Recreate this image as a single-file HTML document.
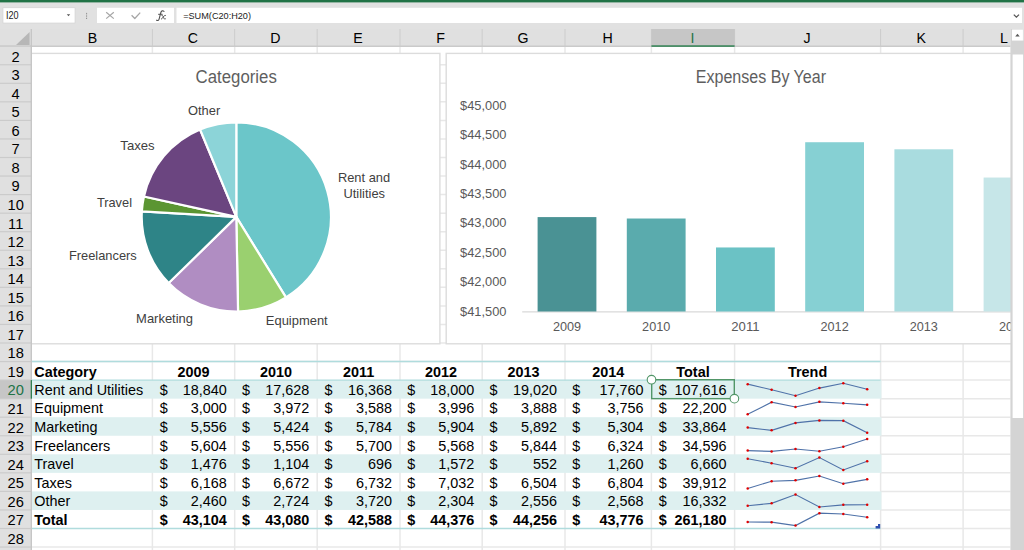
<!DOCTYPE html><html><head><meta charset="utf-8"><style>html,body{margin:0;padding:0;width:1024px;height:550px;overflow:hidden;background:#fff}svg{display:block}text{font-family:"Liberation Sans",sans-serif}</style></head><body>
<svg width="1024" height="550" viewBox="0 0 1024 550">
<rect x="0" y="0" width="1024" height="29" fill="#e1e1e1"/>
<rect x="0" y="0" width="1024" height="2.4" fill="#217346"/>
<rect x="3" y="7.8" width="72" height="15.2" fill="#fff" stroke="#d0d0d0" stroke-width="0.6"/>
<text x="6" y="19.2" font-size="10.2" fill="#222" textLength="12.6" lengthAdjust="spacingAndGlyphs">I20</text>
<path d="M66.8 14.2 L70.2 14.2 L68.5 16.2 Z" fill="#555"/>
<rect x="86.1" y="12.9" width="1.0" height="1.0" fill="#8a8a8a"/>
<rect x="86.1" y="14.6" width="1.0" height="1.0" fill="#8a8a8a"/>
<rect x="86.1" y="16.3" width="1.0" height="1.0" fill="#8a8a8a"/>
<rect x="86.1" y="18.0" width="1.0" height="1.0" fill="#8a8a8a"/>
<rect x="97" y="7.8" width="77" height="15.2" fill="#fff"/>
<path d="M106.2 12.2 L113.8 18.6 M113.8 12.2 L106.2 18.6" stroke="#a6a6a6" stroke-width="1.2" fill="none"/>
<path d="M131.6 15.2 L134.8 18.5 L140.2 12.6" stroke="#a6a6a6" stroke-width="1.3" fill="none" stroke-linejoin="round"/>
<path d="M164 11.3 C163 10.4 161.3 10.6 160.8 12.6 L159.1 19.2 C158.7 20.4 157.6 20.8 156.6 20.2 M158.6 14.3 L162.2 14.3" stroke="#505050" stroke-width="1.1" fill="none" stroke-linecap="round"/>
<path d="M161.9 15.3 C162.8 15.2 163.1 16.2 163.6 17.6 C164 18.8 164.4 19.4 165.4 18.9 M165.4 15.4 C164.6 15.3 163.9 16 162.9 17.3 C162.2 18.4 161.7 19.3 161.3 19" stroke="#505050" stroke-width="1" fill="none" stroke-linecap="round"/>
<rect x="176.5" y="7.8" width="845.5" height="15.2" fill="#fff"/>
<text x="183.2" y="19.4" font-size="9.9" fill="#222" textLength="67.8" lengthAdjust="spacingAndGlyphs">=SUM(C20:H20)</text>
<path d="M1013.8 14.6 L1016.4 17.2 L1019.0 14.6" stroke="#555" stroke-width="1.3" fill="none"/>
<rect x="31" y="46.2" width="979.5" height="503.8" fill="#fff"/>
<line x1="31" y1="46.20" x2="1010.5" y2="46.20" stroke="#e8e8e8" stroke-width="1.5"/>
<line x1="31" y1="64.75" x2="1010.5" y2="64.75" stroke="#e8e8e8" stroke-width="1.5"/>
<line x1="31" y1="83.30" x2="1010.5" y2="83.30" stroke="#e8e8e8" stroke-width="1.5"/>
<line x1="31" y1="101.85" x2="1010.5" y2="101.85" stroke="#e8e8e8" stroke-width="1.5"/>
<line x1="31" y1="120.40" x2="1010.5" y2="120.40" stroke="#e8e8e8" stroke-width="1.5"/>
<line x1="31" y1="138.95" x2="1010.5" y2="138.95" stroke="#e8e8e8" stroke-width="1.5"/>
<line x1="31" y1="157.50" x2="1010.5" y2="157.50" stroke="#e8e8e8" stroke-width="1.5"/>
<line x1="31" y1="176.05" x2="1010.5" y2="176.05" stroke="#e8e8e8" stroke-width="1.5"/>
<line x1="31" y1="194.60" x2="1010.5" y2="194.60" stroke="#e8e8e8" stroke-width="1.5"/>
<line x1="31" y1="213.15" x2="1010.5" y2="213.15" stroke="#e8e8e8" stroke-width="1.5"/>
<line x1="31" y1="231.70" x2="1010.5" y2="231.70" stroke="#e8e8e8" stroke-width="1.5"/>
<line x1="31" y1="250.25" x2="1010.5" y2="250.25" stroke="#e8e8e8" stroke-width="1.5"/>
<line x1="31" y1="268.80" x2="1010.5" y2="268.80" stroke="#e8e8e8" stroke-width="1.5"/>
<line x1="31" y1="287.35" x2="1010.5" y2="287.35" stroke="#e8e8e8" stroke-width="1.5"/>
<line x1="31" y1="305.90" x2="1010.5" y2="305.90" stroke="#e8e8e8" stroke-width="1.5"/>
<line x1="31" y1="324.45" x2="1010.5" y2="324.45" stroke="#e8e8e8" stroke-width="1.5"/>
<line x1="31" y1="343.00" x2="1010.5" y2="343.00" stroke="#e8e8e8" stroke-width="1.5"/>
<line x1="31" y1="361.55" x2="1010.5" y2="361.55" stroke="#e8e8e8" stroke-width="1.5"/>
<line x1="880.60" y1="380.10" x2="1010.5" y2="380.10" stroke="#e8e8e8" stroke-width="1.5"/>
<line x1="880.60" y1="398.65" x2="1010.5" y2="398.65" stroke="#e8e8e8" stroke-width="1.5"/>
<line x1="880.60" y1="417.20" x2="1010.5" y2="417.20" stroke="#e8e8e8" stroke-width="1.5"/>
<line x1="880.60" y1="435.75" x2="1010.5" y2="435.75" stroke="#e8e8e8" stroke-width="1.5"/>
<line x1="880.60" y1="454.30" x2="1010.5" y2="454.30" stroke="#e8e8e8" stroke-width="1.5"/>
<line x1="880.60" y1="472.85" x2="1010.5" y2="472.85" stroke="#e8e8e8" stroke-width="1.5"/>
<line x1="880.60" y1="491.40" x2="1010.5" y2="491.40" stroke="#e8e8e8" stroke-width="1.5"/>
<line x1="880.60" y1="509.95" x2="1010.5" y2="509.95" stroke="#e8e8e8" stroke-width="1.5"/>
<line x1="880.60" y1="528.50" x2="1010.5" y2="528.50" stroke="#e8e8e8" stroke-width="1.5"/>
<line x1="31" y1="547.05" x2="1010.5" y2="547.05" stroke="#e8e8e8" stroke-width="1.5"/>
<line x1="152.40" y1="29.0" x2="152.40" y2="550" stroke="#e8e8e8" stroke-width="1.5"/>
<line x1="234.70" y1="29.0" x2="234.70" y2="550" stroke="#e8e8e8" stroke-width="1.5"/>
<line x1="317.20" y1="29.0" x2="317.20" y2="550" stroke="#e8e8e8" stroke-width="1.5"/>
<line x1="400.00" y1="29.0" x2="400.00" y2="550" stroke="#e8e8e8" stroke-width="1.5"/>
<line x1="482.20" y1="29.0" x2="482.20" y2="550" stroke="#e8e8e8" stroke-width="1.5"/>
<line x1="565.00" y1="29.0" x2="565.00" y2="550" stroke="#e8e8e8" stroke-width="1.5"/>
<line x1="651.40" y1="29.0" x2="651.40" y2="550" stroke="#e8e8e8" stroke-width="1.5"/>
<line x1="734.60" y1="29.0" x2="734.60" y2="550" stroke="#e8e8e8" stroke-width="1.5"/>
<line x1="880.60" y1="29.0" x2="880.60" y2="550" stroke="#e8e8e8" stroke-width="1.5"/>
<line x1="963.10" y1="29.0" x2="963.10" y2="550" stroke="#e8e8e8" stroke-width="1.5"/>
<rect x="31.5" y="380.10" width="849.90" height="18.55" fill="#def0f0"/>
<rect x="31.5" y="417.20" width="849.90" height="18.55" fill="#def0f0"/>
<rect x="31.5" y="454.30" width="849.90" height="18.55" fill="#def0f0"/>
<rect x="31.5" y="491.40" width="849.90" height="18.55" fill="#def0f0"/>
<line x1="31.5" y1="361.55" x2="880.6" y2="361.55" stroke="#b0dcdd" stroke-width="1.4"/>
<line x1="31.5" y1="380.10" x2="880.6" y2="380.10" stroke="#b0dcdd" stroke-width="1.4"/>
<line x1="31.5" y1="528.50" x2="880.6" y2="528.50" stroke="#b0dcdd" stroke-width="1.4"/>
<text x="34.30" y="376.85" font-size="14.4" text-anchor="start" fill="#000" font-weight="bold">Category</text>
<text x="193.55" y="376.85" font-size="14.4" text-anchor="middle" fill="#000" font-weight="bold">2009</text>
<text x="275.95" y="376.85" font-size="14.4" text-anchor="middle" fill="#000" font-weight="bold">2010</text>
<text x="358.60" y="376.85" font-size="14.4" text-anchor="middle" fill="#000" font-weight="bold">2011</text>
<text x="441.10" y="376.85" font-size="14.4" text-anchor="middle" fill="#000" font-weight="bold">2012</text>
<text x="523.60" y="376.85" font-size="14.4" text-anchor="middle" fill="#000" font-weight="bold">2013</text>
<text x="608.20" y="376.85" font-size="14.4" text-anchor="middle" fill="#000" font-weight="bold">2014</text>
<text x="693.00" y="376.85" font-size="14.4" text-anchor="middle" fill="#000" font-weight="bold">Total</text>
<text x="807.60" y="376.85" font-size="14.4" text-anchor="middle" fill="#000" font-weight="bold">Trend</text>
<text x="34.30" y="394.90" font-size="14.4" text-anchor="start" fill="#000">Rent and Utilities</text>
<text x="159.70" y="394.90" font-size="14.4" text-anchor="start" fill="#000">$</text>
<text x="226.70" y="394.90" font-size="14.4" text-anchor="end" fill="#000">18,840</text>
<text x="242.00" y="394.90" font-size="14.4" text-anchor="start" fill="#000">$</text>
<text x="309.20" y="394.90" font-size="14.4" text-anchor="end" fill="#000">17,628</text>
<text x="324.50" y="394.90" font-size="14.4" text-anchor="start" fill="#000">$</text>
<text x="392.00" y="394.90" font-size="14.4" text-anchor="end" fill="#000">16,368</text>
<text x="407.30" y="394.90" font-size="14.4" text-anchor="start" fill="#000">$</text>
<text x="474.20" y="394.90" font-size="14.4" text-anchor="end" fill="#000">18,000</text>
<text x="489.50" y="394.90" font-size="14.4" text-anchor="start" fill="#000">$</text>
<text x="557.00" y="394.90" font-size="14.4" text-anchor="end" fill="#000">19,020</text>
<text x="572.30" y="394.90" font-size="14.4" text-anchor="start" fill="#000">$</text>
<text x="643.40" y="394.90" font-size="14.4" text-anchor="end" fill="#000">17,760</text>
<text x="658.70" y="394.90" font-size="14.4" text-anchor="start" fill="#000">$</text>
<text x="726.60" y="394.90" font-size="14.4" text-anchor="end" fill="#000">107,616</text>
<text x="34.30" y="413.45" font-size="14.4" text-anchor="start" fill="#000">Equipment</text>
<text x="159.70" y="413.45" font-size="14.4" text-anchor="start" fill="#000">$</text>
<text x="226.70" y="413.45" font-size="14.4" text-anchor="end" fill="#000">3,000</text>
<text x="242.00" y="413.45" font-size="14.4" text-anchor="start" fill="#000">$</text>
<text x="309.20" y="413.45" font-size="14.4" text-anchor="end" fill="#000">3,972</text>
<text x="324.50" y="413.45" font-size="14.4" text-anchor="start" fill="#000">$</text>
<text x="392.00" y="413.45" font-size="14.4" text-anchor="end" fill="#000">3,588</text>
<text x="407.30" y="413.45" font-size="14.4" text-anchor="start" fill="#000">$</text>
<text x="474.20" y="413.45" font-size="14.4" text-anchor="end" fill="#000">3,996</text>
<text x="489.50" y="413.45" font-size="14.4" text-anchor="start" fill="#000">$</text>
<text x="557.00" y="413.45" font-size="14.4" text-anchor="end" fill="#000">3,888</text>
<text x="572.30" y="413.45" font-size="14.4" text-anchor="start" fill="#000">$</text>
<text x="643.40" y="413.45" font-size="14.4" text-anchor="end" fill="#000">3,756</text>
<text x="658.70" y="413.45" font-size="14.4" text-anchor="start" fill="#000">$</text>
<text x="726.60" y="413.45" font-size="14.4" text-anchor="end" fill="#000">22,200</text>
<text x="34.30" y="432.00" font-size="14.4" text-anchor="start" fill="#000">Marketing</text>
<text x="159.70" y="432.00" font-size="14.4" text-anchor="start" fill="#000">$</text>
<text x="226.70" y="432.00" font-size="14.4" text-anchor="end" fill="#000">5,556</text>
<text x="242.00" y="432.00" font-size="14.4" text-anchor="start" fill="#000">$</text>
<text x="309.20" y="432.00" font-size="14.4" text-anchor="end" fill="#000">5,424</text>
<text x="324.50" y="432.00" font-size="14.4" text-anchor="start" fill="#000">$</text>
<text x="392.00" y="432.00" font-size="14.4" text-anchor="end" fill="#000">5,784</text>
<text x="407.30" y="432.00" font-size="14.4" text-anchor="start" fill="#000">$</text>
<text x="474.20" y="432.00" font-size="14.4" text-anchor="end" fill="#000">5,904</text>
<text x="489.50" y="432.00" font-size="14.4" text-anchor="start" fill="#000">$</text>
<text x="557.00" y="432.00" font-size="14.4" text-anchor="end" fill="#000">5,892</text>
<text x="572.30" y="432.00" font-size="14.4" text-anchor="start" fill="#000">$</text>
<text x="643.40" y="432.00" font-size="14.4" text-anchor="end" fill="#000">5,304</text>
<text x="658.70" y="432.00" font-size="14.4" text-anchor="start" fill="#000">$</text>
<text x="726.60" y="432.00" font-size="14.4" text-anchor="end" fill="#000">33,864</text>
<text x="34.30" y="450.55" font-size="14.4" text-anchor="start" fill="#000">Freelancers</text>
<text x="159.70" y="450.55" font-size="14.4" text-anchor="start" fill="#000">$</text>
<text x="226.70" y="450.55" font-size="14.4" text-anchor="end" fill="#000">5,604</text>
<text x="242.00" y="450.55" font-size="14.4" text-anchor="start" fill="#000">$</text>
<text x="309.20" y="450.55" font-size="14.4" text-anchor="end" fill="#000">5,556</text>
<text x="324.50" y="450.55" font-size="14.4" text-anchor="start" fill="#000">$</text>
<text x="392.00" y="450.55" font-size="14.4" text-anchor="end" fill="#000">5,700</text>
<text x="407.30" y="450.55" font-size="14.4" text-anchor="start" fill="#000">$</text>
<text x="474.20" y="450.55" font-size="14.4" text-anchor="end" fill="#000">5,568</text>
<text x="489.50" y="450.55" font-size="14.4" text-anchor="start" fill="#000">$</text>
<text x="557.00" y="450.55" font-size="14.4" text-anchor="end" fill="#000">5,844</text>
<text x="572.30" y="450.55" font-size="14.4" text-anchor="start" fill="#000">$</text>
<text x="643.40" y="450.55" font-size="14.4" text-anchor="end" fill="#000">6,324</text>
<text x="658.70" y="450.55" font-size="14.4" text-anchor="start" fill="#000">$</text>
<text x="726.60" y="450.55" font-size="14.4" text-anchor="end" fill="#000">34,596</text>
<text x="34.30" y="469.10" font-size="14.4" text-anchor="start" fill="#000">Travel</text>
<text x="159.70" y="469.10" font-size="14.4" text-anchor="start" fill="#000">$</text>
<text x="226.70" y="469.10" font-size="14.4" text-anchor="end" fill="#000">1,476</text>
<text x="242.00" y="469.10" font-size="14.4" text-anchor="start" fill="#000">$</text>
<text x="309.20" y="469.10" font-size="14.4" text-anchor="end" fill="#000">1,104</text>
<text x="324.50" y="469.10" font-size="14.4" text-anchor="start" fill="#000">$</text>
<text x="392.00" y="469.10" font-size="14.4" text-anchor="end" fill="#000">696</text>
<text x="407.30" y="469.10" font-size="14.4" text-anchor="start" fill="#000">$</text>
<text x="474.20" y="469.10" font-size="14.4" text-anchor="end" fill="#000">1,572</text>
<text x="489.50" y="469.10" font-size="14.4" text-anchor="start" fill="#000">$</text>
<text x="557.00" y="469.10" font-size="14.4" text-anchor="end" fill="#000">552</text>
<text x="572.30" y="469.10" font-size="14.4" text-anchor="start" fill="#000">$</text>
<text x="643.40" y="469.10" font-size="14.4" text-anchor="end" fill="#000">1,260</text>
<text x="658.70" y="469.10" font-size="14.4" text-anchor="start" fill="#000">$</text>
<text x="726.60" y="469.10" font-size="14.4" text-anchor="end" fill="#000">6,660</text>
<text x="34.30" y="487.65" font-size="14.4" text-anchor="start" fill="#000">Taxes</text>
<text x="159.70" y="487.65" font-size="14.4" text-anchor="start" fill="#000">$</text>
<text x="226.70" y="487.65" font-size="14.4" text-anchor="end" fill="#000">6,168</text>
<text x="242.00" y="487.65" font-size="14.4" text-anchor="start" fill="#000">$</text>
<text x="309.20" y="487.65" font-size="14.4" text-anchor="end" fill="#000">6,672</text>
<text x="324.50" y="487.65" font-size="14.4" text-anchor="start" fill="#000">$</text>
<text x="392.00" y="487.65" font-size="14.4" text-anchor="end" fill="#000">6,732</text>
<text x="407.30" y="487.65" font-size="14.4" text-anchor="start" fill="#000">$</text>
<text x="474.20" y="487.65" font-size="14.4" text-anchor="end" fill="#000">7,032</text>
<text x="489.50" y="487.65" font-size="14.4" text-anchor="start" fill="#000">$</text>
<text x="557.00" y="487.65" font-size="14.4" text-anchor="end" fill="#000">6,504</text>
<text x="572.30" y="487.65" font-size="14.4" text-anchor="start" fill="#000">$</text>
<text x="643.40" y="487.65" font-size="14.4" text-anchor="end" fill="#000">6,804</text>
<text x="658.70" y="487.65" font-size="14.4" text-anchor="start" fill="#000">$</text>
<text x="726.60" y="487.65" font-size="14.4" text-anchor="end" fill="#000">39,912</text>
<text x="34.30" y="506.20" font-size="14.4" text-anchor="start" fill="#000">Other</text>
<text x="159.70" y="506.20" font-size="14.4" text-anchor="start" fill="#000">$</text>
<text x="226.70" y="506.20" font-size="14.4" text-anchor="end" fill="#000">2,460</text>
<text x="242.00" y="506.20" font-size="14.4" text-anchor="start" fill="#000">$</text>
<text x="309.20" y="506.20" font-size="14.4" text-anchor="end" fill="#000">2,724</text>
<text x="324.50" y="506.20" font-size="14.4" text-anchor="start" fill="#000">$</text>
<text x="392.00" y="506.20" font-size="14.4" text-anchor="end" fill="#000">3,720</text>
<text x="407.30" y="506.20" font-size="14.4" text-anchor="start" fill="#000">$</text>
<text x="474.20" y="506.20" font-size="14.4" text-anchor="end" fill="#000">2,304</text>
<text x="489.50" y="506.20" font-size="14.4" text-anchor="start" fill="#000">$</text>
<text x="557.00" y="506.20" font-size="14.4" text-anchor="end" fill="#000">2,556</text>
<text x="572.30" y="506.20" font-size="14.4" text-anchor="start" fill="#000">$</text>
<text x="643.40" y="506.20" font-size="14.4" text-anchor="end" fill="#000">2,568</text>
<text x="658.70" y="506.20" font-size="14.4" text-anchor="start" fill="#000">$</text>
<text x="726.60" y="506.20" font-size="14.4" text-anchor="end" fill="#000">16,332</text>
<text x="34.30" y="524.75" font-size="14.4" text-anchor="start" fill="#000" font-weight="bold">Total</text>
<text x="159.70" y="524.75" font-size="14.4" text-anchor="start" fill="#000" font-weight="bold">$</text>
<text x="226.70" y="524.75" font-size="14.4" text-anchor="end" fill="#000" font-weight="bold">43,104</text>
<text x="242.00" y="524.75" font-size="14.4" text-anchor="start" fill="#000" font-weight="bold">$</text>
<text x="309.20" y="524.75" font-size="14.4" text-anchor="end" fill="#000" font-weight="bold">43,080</text>
<text x="324.50" y="524.75" font-size="14.4" text-anchor="start" fill="#000" font-weight="bold">$</text>
<text x="392.00" y="524.75" font-size="14.4" text-anchor="end" fill="#000" font-weight="bold">42,588</text>
<text x="407.30" y="524.75" font-size="14.4" text-anchor="start" fill="#000" font-weight="bold">$</text>
<text x="474.20" y="524.75" font-size="14.4" text-anchor="end" fill="#000" font-weight="bold">44,376</text>
<text x="489.50" y="524.75" font-size="14.4" text-anchor="start" fill="#000" font-weight="bold">$</text>
<text x="557.00" y="524.75" font-size="14.4" text-anchor="end" fill="#000" font-weight="bold">44,256</text>
<text x="572.30" y="524.75" font-size="14.4" text-anchor="start" fill="#000" font-weight="bold">$</text>
<text x="643.40" y="524.75" font-size="14.4" text-anchor="end" fill="#000" font-weight="bold">43,776</text>
<text x="658.70" y="524.75" font-size="14.4" text-anchor="start" fill="#000" font-weight="bold">$</text>
<text x="726.60" y="524.75" font-size="14.4" text-anchor="end" fill="#000" font-weight="bold">261,180</text>
<path d="M747.70 384.15 L771.60 389.83 L795.50 395.75 L819.40 388.09 L843.30 383.30 L867.20 389.22" stroke="#4f72a8" stroke-width="1.1" fill="none"/>
<circle cx="747.70" cy="384.15" r="1.25" fill="#e00000"/>
<circle cx="771.60" cy="389.83" r="1.25" fill="#e00000"/>
<circle cx="795.50" cy="395.75" r="1.25" fill="#e00000"/>
<circle cx="819.40" cy="388.09" r="1.25" fill="#e00000"/>
<circle cx="843.30" cy="383.30" r="1.25" fill="#e00000"/>
<circle cx="867.20" cy="389.22" r="1.25" fill="#e00000"/>
<path d="M747.70 414.30 L771.60 402.15 L795.50 406.95 L819.40 401.85 L843.30 403.20 L867.20 404.85" stroke="#4f72a8" stroke-width="1.1" fill="none"/>
<circle cx="747.70" cy="414.30" r="1.25" fill="#e00000"/>
<circle cx="771.60" cy="402.15" r="1.25" fill="#e00000"/>
<circle cx="795.50" cy="406.95" r="1.25" fill="#e00000"/>
<circle cx="819.40" cy="401.85" r="1.25" fill="#e00000"/>
<circle cx="843.30" cy="403.20" r="1.25" fill="#e00000"/>
<circle cx="867.20" cy="404.85" r="1.25" fill="#e00000"/>
<path d="M747.70 427.62 L771.60 430.36 L795.50 422.89 L819.40 420.40 L843.30 420.65 L867.20 432.85" stroke="#4f72a8" stroke-width="1.1" fill="none"/>
<circle cx="747.70" cy="427.62" r="1.25" fill="#e00000"/>
<circle cx="771.60" cy="430.36" r="1.25" fill="#e00000"/>
<circle cx="795.50" cy="422.89" r="1.25" fill="#e00000"/>
<circle cx="819.40" cy="420.40" r="1.25" fill="#e00000"/>
<circle cx="843.30" cy="420.65" r="1.25" fill="#e00000"/>
<circle cx="867.20" cy="432.85" r="1.25" fill="#e00000"/>
<path d="M747.70 450.62 L771.60 451.40 L795.50 449.07 L819.40 451.21 L843.30 446.73 L867.20 438.95" stroke="#4f72a8" stroke-width="1.1" fill="none"/>
<circle cx="747.70" cy="450.62" r="1.25" fill="#e00000"/>
<circle cx="771.60" cy="451.40" r="1.25" fill="#e00000"/>
<circle cx="795.50" cy="449.07" r="1.25" fill="#e00000"/>
<circle cx="819.40" cy="451.21" r="1.25" fill="#e00000"/>
<circle cx="843.30" cy="446.73" r="1.25" fill="#e00000"/>
<circle cx="867.20" cy="438.95" r="1.25" fill="#e00000"/>
<path d="M747.70 458.67 L771.60 463.21 L795.50 468.19 L819.40 457.50 L843.30 469.95 L867.20 461.31" stroke="#4f72a8" stroke-width="1.1" fill="none"/>
<circle cx="747.70" cy="458.67" r="1.25" fill="#e00000"/>
<circle cx="771.60" cy="463.21" r="1.25" fill="#e00000"/>
<circle cx="795.50" cy="468.19" r="1.25" fill="#e00000"/>
<circle cx="819.40" cy="457.50" r="1.25" fill="#e00000"/>
<circle cx="843.30" cy="469.95" r="1.25" fill="#e00000"/>
<circle cx="867.20" cy="461.31" r="1.25" fill="#e00000"/>
<path d="M747.70 488.50 L771.60 481.24 L795.50 480.37 L819.40 476.05 L843.30 483.66 L867.20 479.34" stroke="#4f72a8" stroke-width="1.1" fill="none"/>
<circle cx="747.70" cy="488.50" r="1.25" fill="#e00000"/>
<circle cx="771.60" cy="481.24" r="1.25" fill="#e00000"/>
<circle cx="795.50" cy="480.37" r="1.25" fill="#e00000"/>
<circle cx="819.40" cy="476.05" r="1.25" fill="#e00000"/>
<circle cx="843.30" cy="483.66" r="1.25" fill="#e00000"/>
<circle cx="867.20" cy="479.34" r="1.25" fill="#e00000"/>
<path d="M747.70 505.68 L771.60 503.36 L795.50 494.60 L819.40 507.05 L843.30 504.83 L867.20 504.73" stroke="#4f72a8" stroke-width="1.1" fill="none"/>
<circle cx="747.70" cy="505.68" r="1.25" fill="#e00000"/>
<circle cx="771.60" cy="503.36" r="1.25" fill="#e00000"/>
<circle cx="795.50" cy="494.60" r="1.25" fill="#e00000"/>
<circle cx="819.40" cy="507.05" r="1.25" fill="#e00000"/>
<circle cx="843.30" cy="504.83" r="1.25" fill="#e00000"/>
<circle cx="867.20" cy="504.73" r="1.25" fill="#e00000"/>
<path d="M747.70 522.01 L771.60 522.17 L795.50 525.60 L819.40 513.15 L843.30 513.99 L867.20 517.33" stroke="#4f72a8" stroke-width="1.1" fill="none"/>
<circle cx="747.70" cy="522.01" r="1.25" fill="#e00000"/>
<circle cx="771.60" cy="522.17" r="1.25" fill="#e00000"/>
<circle cx="795.50" cy="525.60" r="1.25" fill="#e00000"/>
<circle cx="819.40" cy="513.15" r="1.25" fill="#e00000"/>
<circle cx="843.30" cy="513.99" r="1.25" fill="#e00000"/>
<circle cx="867.20" cy="517.33" r="1.25" fill="#e00000"/>
<path d="M878 523.9 L880.2 523.9 L880.2 528.4 L875.6 528.4 L875.6 526.1 L878 526.1 Z" fill="#3050b0"/>
<rect x="651.70" y="379.70" width="82.60" height="18.95" fill="none" stroke="#529668" stroke-width="1.4"/>
<circle cx="651.50" cy="379.70" r="4.3" fill="#fff" stroke="#529668" stroke-width="1.1"/>
<circle cx="734.40" cy="398.65" r="4.3" fill="#fff" stroke="#529668" stroke-width="1.1"/>
<rect x="20" y="53.4" width="419.9" height="290.40000000000003" fill="#fff" stroke="#dcdcdc" stroke-width="1.4"/>
<rect x="446.2" y="53.4" width="613.8" height="290.40000000000003" fill="#fff" stroke="#dcdcdc" stroke-width="1.4"/>
<path d="M236.3 216.9 L236.30 122.30 A94.6 94.6 0 0 1 285.96 297.42 Z" fill="#6bc6c9" stroke="#fff" stroke-width="2.2" stroke-linejoin="round"/>
<path d="M236.3 216.9 L285.96 297.42 A94.6 94.6 0 0 1 238.06 311.48 Z" fill="#9ad06f" stroke="#fff" stroke-width="2.2" stroke-linejoin="round"/>
<path d="M236.3 216.9 L238.06 311.48 A94.6 94.6 0 0 1 168.70 283.08 Z" fill="#b08dc2" stroke="#fff" stroke-width="2.2" stroke-linejoin="round"/>
<path d="M236.3 216.9 L168.70 283.08 A94.6 94.6 0 0 1 141.86 211.46 Z" fill="#2e8487" stroke="#fff" stroke-width="2.2" stroke-linejoin="round"/>
<path d="M236.3 216.9 L141.86 211.46 A94.6 94.6 0 0 1 143.93 196.46 Z" fill="#5b9532" stroke="#fff" stroke-width="2.2" stroke-linejoin="round"/>
<path d="M236.3 216.9 L143.93 196.46 A94.6 94.6 0 0 1 200.08 129.51 Z" fill="#6b4580" stroke="#fff" stroke-width="2.2" stroke-linejoin="round"/>
<path d="M236.3 216.9 L200.08 129.51 A94.6 94.6 0 0 1 236.30 122.30 Z" fill="#8cd4d8" stroke="#fff" stroke-width="2.2" stroke-linejoin="round"/>
<text x="195.60" y="83.20" font-size="17.5" fill="#5e5e5e" text-anchor="start" textLength="81.2" lengthAdjust="spacingAndGlyphs">Categories</text>
<text x="188.00" y="114.60" font-size="13.5" fill="#404040" text-anchor="start" textLength="32.2" lengthAdjust="spacingAndGlyphs">Other</text>
<text x="120.30" y="150.40" font-size="13.5" fill="#404040" text-anchor="start" textLength="34.4" lengthAdjust="spacingAndGlyphs">Taxes</text>
<text x="96.90" y="206.80" font-size="13.5" fill="#404040" text-anchor="start" textLength="35.1" lengthAdjust="spacingAndGlyphs">Travel</text>
<text x="68.90" y="260.30" font-size="13.5" fill="#404040" text-anchor="start" textLength="67.9" lengthAdjust="spacingAndGlyphs">Freelancers</text>
<text x="136.10" y="322.80" font-size="13.5" fill="#404040" text-anchor="start" textLength="56.9" lengthAdjust="spacingAndGlyphs">Marketing</text>
<text x="265.80" y="325.20" font-size="13.5" fill="#404040" text-anchor="start" textLength="61.9" lengthAdjust="spacingAndGlyphs">Equipment</text>
<text x="337.90" y="182.30" font-size="13.5" fill="#404040" text-anchor="start" textLength="52.3" lengthAdjust="spacingAndGlyphs">Rent and</text>
<text x="343.50" y="197.50" font-size="13.5" fill="#404040" text-anchor="start" textLength="41.5" lengthAdjust="spacingAndGlyphs">Utilities</text>
<text x="695.80" y="83.30" font-size="17.5" fill="#5e5e5e" text-anchor="start" textLength="130.2" lengthAdjust="spacingAndGlyphs">Expenses By Year</text>
<text x="460.10" y="110.00" font-size="13.5" fill="#595959" text-anchor="start" textLength="46.4" lengthAdjust="spacingAndGlyphs">$45,000</text>
<text x="460.10" y="139.36" font-size="13.5" fill="#595959" text-anchor="start" textLength="46.4" lengthAdjust="spacingAndGlyphs">$44,500</text>
<text x="460.10" y="168.72" font-size="13.5" fill="#595959" text-anchor="start" textLength="46.4" lengthAdjust="spacingAndGlyphs">$44,000</text>
<text x="460.10" y="198.08" font-size="13.5" fill="#595959" text-anchor="start" textLength="46.4" lengthAdjust="spacingAndGlyphs">$43,500</text>
<text x="460.10" y="227.44" font-size="13.5" fill="#595959" text-anchor="start" textLength="46.4" lengthAdjust="spacingAndGlyphs">$43,000</text>
<text x="460.10" y="256.80" font-size="13.5" fill="#595959" text-anchor="start" textLength="46.4" lengthAdjust="spacingAndGlyphs">$42,500</text>
<text x="460.10" y="286.16" font-size="13.5" fill="#595959" text-anchor="start" textLength="46.4" lengthAdjust="spacingAndGlyphs">$42,000</text>
<text x="460.10" y="315.52" font-size="13.5" fill="#595959" text-anchor="start" textLength="46.4" lengthAdjust="spacingAndGlyphs">$41,500</text>
<line x1="522.2" y1="311.8" x2="1012" y2="311.8" stroke="#d9d9d9" stroke-width="1.3"/>
<rect x="537.60" y="217.09" width="58.8" height="94.41" fill="#4a9294"/>
<text x="552.90" y="331.00" font-size="13.5" fill="#595959" text-anchor="start" textLength="28.2" lengthAdjust="spacingAndGlyphs">2009</text>
<rect x="626.80" y="218.51" width="58.8" height="92.99" fill="#5aabad"/>
<text x="642.10" y="331.00" font-size="13.5" fill="#595959" text-anchor="start" textLength="28.2" lengthAdjust="spacingAndGlyphs">2010</text>
<rect x="716.00" y="247.46" width="58.8" height="64.04" fill="#6bc2c5"/>
<text x="731.30" y="331.00" font-size="13.5" fill="#595959" text-anchor="start" textLength="28.2" lengthAdjust="spacingAndGlyphs">2011</text>
<rect x="805.20" y="142.23" width="58.8" height="169.27" fill="#86d0d3"/>
<text x="820.50" y="331.00" font-size="13.5" fill="#595959" text-anchor="start" textLength="28.2" lengthAdjust="spacingAndGlyphs">2012</text>
<rect x="894.40" y="149.29" width="58.8" height="162.21" fill="#a9dcdf"/>
<text x="909.70" y="331.00" font-size="13.5" fill="#595959" text-anchor="start" textLength="28.2" lengthAdjust="spacingAndGlyphs">2013</text>
<rect x="983.60" y="177.54" width="58.8" height="133.96" fill="#c6e6e8"/>
<text x="998.90" y="331.00" font-size="13.5" fill="#595959" text-anchor="start" textLength="28.2" lengthAdjust="spacingAndGlyphs">2014</text>
<rect x="0" y="29.0" width="1010.5" height="17.200000000000003" fill="#e0e0e0"/>
<line x1="152.40" y1="29.0" x2="152.40" y2="46.2" stroke="#cccccc" stroke-width="1"/>
<line x1="234.70" y1="29.0" x2="234.70" y2="46.2" stroke="#cccccc" stroke-width="1"/>
<line x1="317.20" y1="29.0" x2="317.20" y2="46.2" stroke="#cccccc" stroke-width="1"/>
<line x1="400.00" y1="29.0" x2="400.00" y2="46.2" stroke="#cccccc" stroke-width="1"/>
<line x1="482.20" y1="29.0" x2="482.20" y2="46.2" stroke="#cccccc" stroke-width="1"/>
<line x1="565.00" y1="29.0" x2="565.00" y2="46.2" stroke="#cccccc" stroke-width="1"/>
<line x1="651.40" y1="29.0" x2="651.40" y2="46.2" stroke="#cccccc" stroke-width="1"/>
<line x1="734.60" y1="29.0" x2="734.60" y2="46.2" stroke="#cccccc" stroke-width="1"/>
<line x1="880.60" y1="29.0" x2="880.60" y2="46.2" stroke="#cccccc" stroke-width="1"/>
<line x1="963.10" y1="29.0" x2="963.10" y2="46.2" stroke="#cccccc" stroke-width="1"/>
<line x1="0" y1="46.2" x2="1010.5" y2="46.2" stroke="#cacaca" stroke-width="1.4"/>
<rect x="651.4" y="29.0" width="83.20000000000005" height="17.200000000000003" fill="#c6c6c6"/>
<rect x="651.4" y="45.300000000000004" width="83.20000000000005" height="1.5" fill="#2f8152"/>
<text x="92.60" y="43.2" font-size="14.2" text-anchor="middle" fill="#000">B</text>
<text x="192.95" y="43.2" font-size="14.2" text-anchor="middle" fill="#000">C</text>
<text x="275.35" y="43.2" font-size="14.2" text-anchor="middle" fill="#000">D</text>
<text x="358.00" y="43.2" font-size="14.2" text-anchor="middle" fill="#000">E</text>
<text x="440.50" y="43.2" font-size="14.2" text-anchor="middle" fill="#000">F</text>
<text x="523.00" y="43.2" font-size="14.2" text-anchor="middle" fill="#000">G</text>
<text x="607.60" y="43.2" font-size="14.2" text-anchor="middle" fill="#000">H</text>
<text x="692.40" y="43.2" font-size="14.2" text-anchor="middle" fill="#217346">I</text>
<text x="807.00" y="43.2" font-size="14.2" text-anchor="middle" fill="#000">J</text>
<text x="921.25" y="43.2" font-size="14.2" text-anchor="middle" fill="#000">K</text>
<text x="1003.95" y="43.2" font-size="14.2" text-anchor="middle" fill="#000">L</text>
<path d="M16 44.9 L29.6 44.9 L29.6 32.1 Z" fill="#b7b7b7"/>
<rect x="0" y="46.2" width="31.6" height="503.8" fill="#e0e0e0"/>
<rect x="0" y="380.10" width="31" height="18.55" fill="#c6c6c6"/>
<line x1="0" y1="46.20" x2="31" y2="46.20" stroke="#cbcbcb" stroke-width="1.2"/>
<text x="15.7" y="61.55" font-size="14.7" text-anchor="middle" fill="#000">2</text>
<line x1="0" y1="64.75" x2="31" y2="64.75" stroke="#cbcbcb" stroke-width="1.2"/>
<text x="15.7" y="80.10" font-size="14.7" text-anchor="middle" fill="#000">3</text>
<line x1="0" y1="83.30" x2="31" y2="83.30" stroke="#cbcbcb" stroke-width="1.2"/>
<text x="15.7" y="98.65" font-size="14.7" text-anchor="middle" fill="#000">4</text>
<line x1="0" y1="101.85" x2="31" y2="101.85" stroke="#cbcbcb" stroke-width="1.2"/>
<text x="15.7" y="117.20" font-size="14.7" text-anchor="middle" fill="#000">5</text>
<line x1="0" y1="120.40" x2="31" y2="120.40" stroke="#cbcbcb" stroke-width="1.2"/>
<text x="15.7" y="135.75" font-size="14.7" text-anchor="middle" fill="#000">6</text>
<line x1="0" y1="138.95" x2="31" y2="138.95" stroke="#cbcbcb" stroke-width="1.2"/>
<text x="15.7" y="154.30" font-size="14.7" text-anchor="middle" fill="#000">7</text>
<line x1="0" y1="157.50" x2="31" y2="157.50" stroke="#cbcbcb" stroke-width="1.2"/>
<text x="15.7" y="172.85" font-size="14.7" text-anchor="middle" fill="#000">8</text>
<line x1="0" y1="176.05" x2="31" y2="176.05" stroke="#cbcbcb" stroke-width="1.2"/>
<text x="15.7" y="191.40" font-size="14.7" text-anchor="middle" fill="#000">9</text>
<line x1="0" y1="194.60" x2="31" y2="194.60" stroke="#cbcbcb" stroke-width="1.2"/>
<text x="15.7" y="209.95" font-size="14.7" text-anchor="middle" fill="#000">10</text>
<line x1="0" y1="213.15" x2="31" y2="213.15" stroke="#cbcbcb" stroke-width="1.2"/>
<text x="15.7" y="228.50" font-size="14.7" text-anchor="middle" fill="#000">11</text>
<line x1="0" y1="231.70" x2="31" y2="231.70" stroke="#cbcbcb" stroke-width="1.2"/>
<text x="15.7" y="247.05" font-size="14.7" text-anchor="middle" fill="#000">12</text>
<line x1="0" y1="250.25" x2="31" y2="250.25" stroke="#cbcbcb" stroke-width="1.2"/>
<text x="15.7" y="265.60" font-size="14.7" text-anchor="middle" fill="#000">13</text>
<line x1="0" y1="268.80" x2="31" y2="268.80" stroke="#cbcbcb" stroke-width="1.2"/>
<text x="15.7" y="284.15" font-size="14.7" text-anchor="middle" fill="#000">14</text>
<line x1="0" y1="287.35" x2="31" y2="287.35" stroke="#cbcbcb" stroke-width="1.2"/>
<text x="15.7" y="302.70" font-size="14.7" text-anchor="middle" fill="#000">15</text>
<line x1="0" y1="305.90" x2="31" y2="305.90" stroke="#cbcbcb" stroke-width="1.2"/>
<text x="15.7" y="321.25" font-size="14.7" text-anchor="middle" fill="#000">16</text>
<line x1="0" y1="324.45" x2="31" y2="324.45" stroke="#cbcbcb" stroke-width="1.2"/>
<text x="15.7" y="339.80" font-size="14.7" text-anchor="middle" fill="#000">17</text>
<line x1="0" y1="343.00" x2="31" y2="343.00" stroke="#cbcbcb" stroke-width="1.2"/>
<text x="15.7" y="358.35" font-size="14.7" text-anchor="middle" fill="#000">18</text>
<line x1="0" y1="361.55" x2="31" y2="361.55" stroke="#cbcbcb" stroke-width="1.2"/>
<text x="15.7" y="376.90" font-size="14.7" text-anchor="middle" fill="#000">19</text>
<line x1="0" y1="380.10" x2="31" y2="380.10" stroke="#cbcbcb" stroke-width="1.2"/>
<text x="15.7" y="395.45" font-size="14.7" text-anchor="middle" fill="#217346">20</text>
<line x1="0" y1="398.65" x2="31" y2="398.65" stroke="#cbcbcb" stroke-width="1.2"/>
<text x="15.7" y="414.00" font-size="14.7" text-anchor="middle" fill="#000">21</text>
<line x1="0" y1="417.20" x2="31" y2="417.20" stroke="#cbcbcb" stroke-width="1.2"/>
<text x="15.7" y="432.55" font-size="14.7" text-anchor="middle" fill="#000">22</text>
<line x1="0" y1="435.75" x2="31" y2="435.75" stroke="#cbcbcb" stroke-width="1.2"/>
<text x="15.7" y="451.10" font-size="14.7" text-anchor="middle" fill="#000">23</text>
<line x1="0" y1="454.30" x2="31" y2="454.30" stroke="#cbcbcb" stroke-width="1.2"/>
<text x="15.7" y="469.65" font-size="14.7" text-anchor="middle" fill="#000">24</text>
<line x1="0" y1="472.85" x2="31" y2="472.85" stroke="#cbcbcb" stroke-width="1.2"/>
<text x="15.7" y="488.20" font-size="14.7" text-anchor="middle" fill="#000">25</text>
<line x1="0" y1="491.40" x2="31" y2="491.40" stroke="#cbcbcb" stroke-width="1.2"/>
<text x="15.7" y="506.75" font-size="14.7" text-anchor="middle" fill="#000">26</text>
<line x1="0" y1="509.95" x2="31" y2="509.95" stroke="#cbcbcb" stroke-width="1.2"/>
<text x="15.7" y="525.30" font-size="14.7" text-anchor="middle" fill="#000">27</text>
<line x1="0" y1="528.50" x2="31" y2="528.50" stroke="#cbcbcb" stroke-width="1.2"/>
<text x="15.7" y="543.85" font-size="14.7" text-anchor="middle" fill="#000">28</text>
<line x1="0" y1="547.05" x2="31" y2="547.05" stroke="#cbcbcb" stroke-width="1.2"/>
<line x1="31.3" y1="29.0" x2="31.3" y2="550" stroke="#c4c4c4" stroke-width="1.3"/>
<rect x="30.7" y="380.10" width="1.3" height="18.55" fill="#2f7f50"/>
<rect x="1010.4" y="29" width="13.6" height="521" fill="#d4d4d4"/>
<rect x="1012.2" y="29" width="11.8" height="11.6" fill="#e0e0e0"/>
<rect x="1012.6" y="54.5" width="10.5" height="363.5" fill="#fff"/>
<rect x="1012" y="29.7" width="10.9" height="10.8" fill="#fff"/>
<path d="M1015.2 36.4 L1017.45 33.7 L1019.7 36.4 Z" fill="#5a5a5a"/>
</svg></body></html>
